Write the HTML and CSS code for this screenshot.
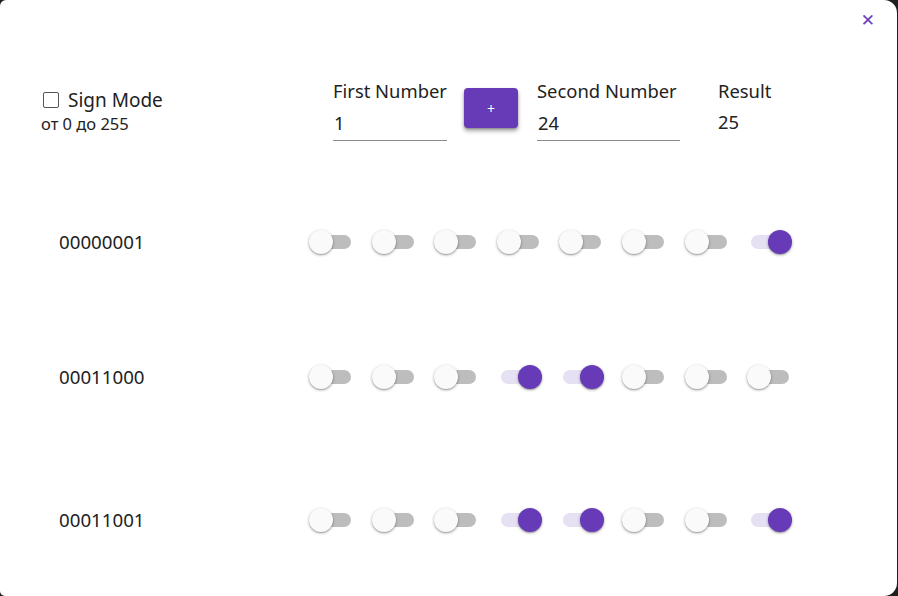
FILE: index.html
```html
<!DOCTYPE html>
<html>
<head>
<meta charset="utf-8">
<link rel="stylesheet" href="styles.css">
</head>
<body>
<div class="dialog">
  <div class="topbar"><span class="close">✕</span></div>
  <div class="header">
    <div class="sign">
      <label class="sign-label"><span class="box"></span>Sign Mode</label>
      <div class="range">от 0 до 255</div>
    </div>
    <div class="field field-first">
      <div class="field-label">First Number</div>
      <div class="field-input">1</div>
    </div>
    <button class="plus">+</button>
    <div class="field field-second">
      <div class="field-label">Second Number</div>
      <div class="field-input">24</div>
    </div>
    <div class="result">
      <div class="field-label">Result</div>
      <div class="result-value">25</div>
    </div>
  </div>
  <div class="rows">
    <div class="row">
      <div class="bits">00000001</div>
      <div class="toggles">
        <span class="toggle"></span><span class="toggle"></span><span class="toggle"></span><span class="toggle"></span><span class="toggle"></span><span class="toggle"></span><span class="toggle"></span><span class="toggle on"></span>
      </div>
    </div>
    <div class="row">
      <div class="bits">00011000</div>
      <div class="toggles">
        <span class="toggle"></span><span class="toggle"></span><span class="toggle"></span><span class="toggle on"></span><span class="toggle on"></span><span class="toggle"></span><span class="toggle"></span><span class="toggle"></span>
      </div>
    </div>
    <div class="row row-last">
      <div class="bits">00011001</div>
      <div class="toggles">
        <span class="toggle"></span><span class="toggle"></span><span class="toggle"></span><span class="toggle on"></span><span class="toggle on"></span><span class="toggle"></span><span class="toggle"></span><span class="toggle on"></span>
      </div>
    </div>
  </div>
</div>
</body>
</html>
```

FILE: styles.css
```css
html, body {
  margin: 0;
  padding: 0;
  background: #1e1e1e;
}
body {
  width: 898px;
  height: 596px;
  overflow: hidden;
  font-family: "Noto Sans", "Open Sans", sans-serif;
  color: #222;
}
.dialog {
  width: 897px;
  height: 596px;
  background: #fff;
  border-radius: 6px 13px 13px 5px;
  box-sizing: border-box;
}
.topbar {
  height: 40px;
  display: flex;
  justify-content: flex-end;
  align-items: center;
  padding-right: 22px;
}
.close {
  color: #6a3fc0;
  font-size: 17px;
  line-height: 1;
  font-family: "DejaVu Sans", sans-serif;
}
.header {
  display: flex;
  align-items: flex-start;
  margin-top: 38px;
  padding-left: 41px;
}
.sign {
  width: 292px;
  padding-top: 10px;
}
.sign-label {
  display: flex;
  align-items: center;
  font-size: 19px;
  line-height: 24px;
}
.box {
  width: 16px;
  height: 16px;
  border: 1.5px solid #555;
  border-radius: 2px;
  margin: 0 9px 0 2px;
  box-sizing: border-box;
}
.range {
  font-size: 16.5px;
  line-height: 20px;
  margin-top: 2px;
}
.field-label {
  font-size: 18.4px;
  line-height: 26px;
}
.field-input {
  font-size: 18.4px;
  line-height: 26px;
  padding: 6px 0 4px 1px;
  border-bottom: 1px solid #8a8a8a;
}
.field-first { width: 114px; }
.field-second { width: 143px; margin-left: 19px; }
.plus {
  margin: 10px 0 0 17px;
  width: 54px;
  height: 40px;
  border: none;
  border-radius: 4px;
  background: #673ab7;
  color: #fff;
  font-size: 14px;
  font-family: "Noto Sans", sans-serif;
  box-shadow: 0 3px 4px rgba(0,0,0,0.35), 0 1px 2px rgba(0,0,0,0.2);
}
.result { margin-left: 38px; }
.result-value {
  font-size: 18.4px;
  line-height: 26px;
  padding-top: 5px;
}
.rows {
  margin-top: 87px;
  display: flex;
  flex-direction: column;
  gap: 108px;
}
.row {
  display: flex;
  align-items: center;
  height: 27px;
  padding-left: 59px;
}
.row-last { margin-top: 8px; }
.bits {
  width: 254px;
  font-size: 18.7px;
}
.toggles {
  display: flex;
  gap: 24.6px;
}
.toggle {
  position: relative;
  width: 38px;
  height: 14px;
  border-radius: 7px;
  background: #bdbdbd;
}
.toggle::after {
  content: "";
  position: absolute;
  left: -4px;
  top: -5px;
  width: 24px;
  height: 24px;
  border-radius: 50%;
  background: #fafafa;
  box-shadow: 0 1px 3px rgba(0,0,0,0.35), 0 1px 1px rgba(0,0,0,0.14);
}
.toggle.on {
  background: #e6e0f3;
}
.toggle.on::after {
  left: 17px;
  background: #673ab7;
}
```
